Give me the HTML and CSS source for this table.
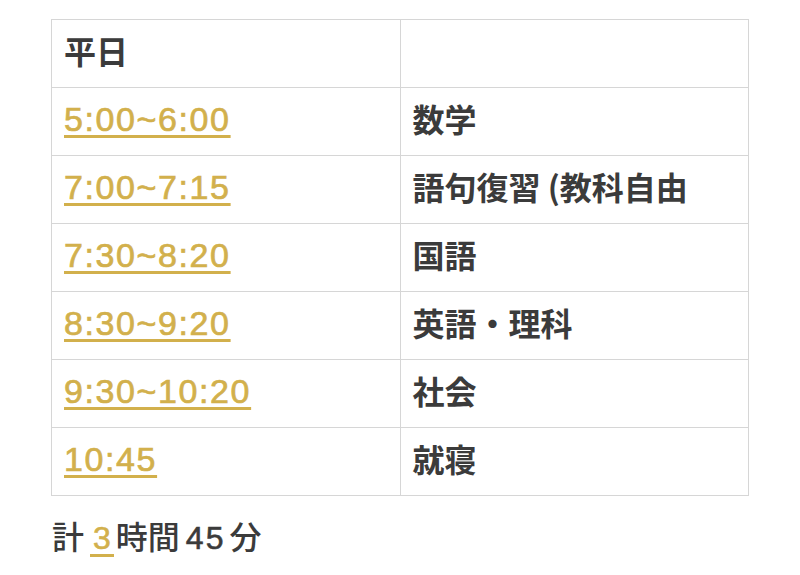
FILE: index.html
```html
<!DOCTYPE html>
<html lang="ja">
<head>
<meta charset="utf-8">
<link rel="stylesheet" href="styles.css">
</head>
<body>
<div class="page">
  <table class="schedule">
    <tr><th>平日</th><th></th></tr>
    <tr><td><a class="time">5:00~6:00</a></td><td class="subj">数学</td></tr>
    <tr><td><a class="time">7:00~7:15</a></td><td class="subj">語句復習 (教科自由</td></tr>
    <tr><td><a class="time">7:30~8:20</a></td><td class="subj">国語</td></tr>
    <tr><td><a class="time">8:30~9:20</a></td><td class="subj">英語・理科</td></tr>
    <tr><td><a class="time">9:30~10:20</a></td><td class="subj">社会</td></tr>
    <tr><td><a class="time">10:45</a></td><td class="subj">就寝</td></tr>
  </table>
  <p class="total">計<a class="num">3</a>時間<span class="mins">45</span>分</p>
</div>
</body>
</html>
```
FILE: styles.css
```css
html, body {
  margin: 0;
  padding: 0;
  background: #ffffff;
}
.page {
  padding: 19px 0 0 51px;
  font-family: "Noto Sans CJK JP", "Noto Sans", sans-serif;
  color: #3b3b3b;
}
.schedule {
  border-collapse: collapse;
  width: 698px;
  table-layout: fixed;
}
.schedule tr {
  height: 68px;
}
.schedule th,
.schedule td {
  border: 1px solid #d6d6d6;
  padding: 0 12px 7px;
  text-align: left;
  vertical-align: middle;
  font-size: 32px;
  line-height: 40px;
}
.schedule th {
  font-weight: 700;
}
.subj {
  font-weight: 700;
}
.time {
  font-family: "Liberation Sans", Arial, sans-serif;
  font-size: 34px;
  color: #d2b04c;
  font-weight: 400;
  -webkit-text-stroke: 0.7px #d2b04c;
  text-decoration: underline;
  text-decoration-thickness: 3px;
  text-underline-offset: 4px;
  letter-spacing: 1.6px;
}
.total {
  margin: 19px 0 0 1px;
  font-size: 32px;
  font-weight: 500;
  line-height: 40px;
}
.num {
  display: inline-block;
  font-family: "Liberation Sans", Arial, sans-serif;
  color: #d2b04c;
  -webkit-text-stroke: 0.6px #d2b04c;
  line-height: 32px;
  padding: 0 3px;
  margin: 0 2px 0 6px;
  border-bottom: 3px solid #d2b04c;
}
.mins {
  font-family: "Liberation Sans", Arial, sans-serif;
  -webkit-text-stroke: 0.6px #3b3b3b;
  letter-spacing: 2px;
  margin: 0 4px 0 6px;
}
```
